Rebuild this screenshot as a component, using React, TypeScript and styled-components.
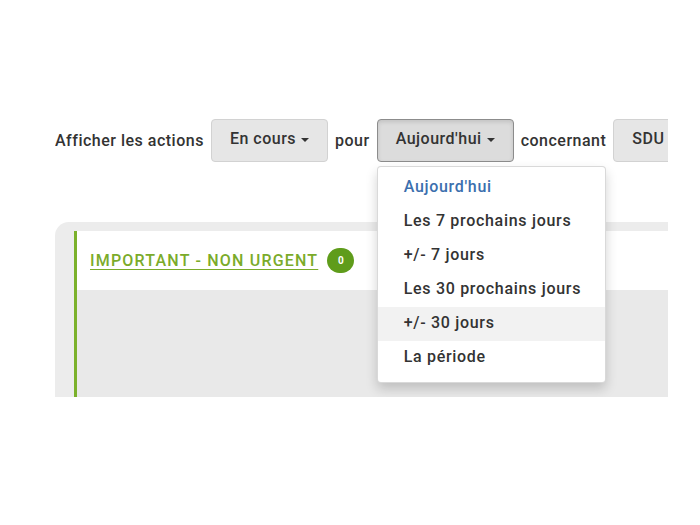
import React from 'react';
import styled, { createGlobalStyle } from 'styled-components';

const Global = createGlobalStyle`
  body {
    margin: 0;
    background: #fff;
    font-family: Roboto, "Liberation Sans", sans-serif;
    color: #333;
  }
`

const Page = styled.div`
  width: 613px;
  height: 397px;
  margin-left: 55px;
  padding-top: 119px;
  box-sizing: border-box;
  overflow: hidden;
`

const Toolbar = styled.div`
  display: flex;
  align-items: center;
  gap: 7px;
  white-space: nowrap;
  font-size: 16px;
  font-weight: 500;
  letter-spacing: 0.5px;
`

const Label = styled.span`
  color: #333;
`

const Group = styled.div`
  position: relative;
  flex-shrink: 0;
`

const Button = styled.button<{ $open?: boolean }>`
  height: 43px;
  padding: 0 18px 4px;
  display: flex;
  align-items: center;
  gap: 5px;
  font: inherit;
  letter-spacing: inherit;
  color: #333;
  background: ${p => (p.$open ? '#dcdcdc' : '#e6e6e6')};
  border: 1px solid ${p => (p.$open ? '#8c8c8c' : '#d2d2d2')};
  border-radius: 4px;
  box-shadow: ${p => (p.$open ? 'inset 0 2px 4px rgba(0,0,0,.12)' : 'none')};
`

const Caret = styled.span`
  width: 0;
  height: 0;
  border-left: 4px solid transparent;
  border-right: 4px solid transparent;
  border-top: 4px solid #333;
  margin-top: 2px;
`

const Menu = styled.ul`
  position: absolute;
  top: 47px;
  left: 0;
  width: 229px;
  margin: 0;
  padding: 4px 0 7px;
  list-style: none;
  background: #fff;
  border: 1px solid rgba(0, 0, 0, 0.15);
  border-radius: 4px;
  box-shadow: 0 6px 12px rgba(0, 0, 0, 0.18);
  box-sizing: border-box;
  letter-spacing: 0.7px;
  z-index: 5;
`

const Item = styled.li<{ $active?: boolean; $hover?: boolean }>`
  height: 34px;
  line-height: 32px;
  padding-left: 26px;
  color: ${p => (p.$active ? '#3b6fae' : '#333')};
  background: ${p => (p.$hover ? '#f2f2f2' : 'transparent')};
`

const Panel = styled.div`
  margin-top: 60px;
  background: #ececec;
  border-top-left-radius: 14px;
  padding: 9px 0 0 19px;
  height: 200px;
`

const Column = styled.div`
  border-left: 3px solid #7bb12b;
  height: 100%;
  background: #e9e9e9;
`

const Header = styled.div`
  height: 59px;
  background: #fff;
  display: flex;
  align-items: center;
  gap: 9px;
  padding-left: 13px;
`

const Title = styled.a`
  color: #7bab2a;
  text-decoration: underline;
  text-underline-offset: 3px;
  font-size: 16px;
  font-weight: 500;
  letter-spacing: 1.2px;
  text-transform: uppercase;
`

const Badge = styled.span`
  width: 27px;
  height: 25px;
  border-radius: 13px;
  background: #5f9c1b;
  color: #fff;
  font-size: 10px;
  font-weight: 700;
  display: flex;
  align-items: center;
  justify-content: center;
`

const periods = [
  "Aujourd'hui",
  'Les 7 prochains jours',
  '+/- 7 jours',
  'Les 30 prochains jours',
  '+/- 30 jours',
  'La période',
]

const App: React.FC = () => {
  return (
    <>
      <Global />
      <Page>
        <Toolbar>
          <Label>Afficher les actions</Label>
          <Group>
            <Button>En cours <Caret /></Button>
          </Group>
          <Label>pour</Label>
          <Group>
            <Button $open>Aujourd'hui <Caret /></Button>
            <Menu>
              {periods.map((p, i) => (
                <Item key={p} $active={i === 0} $hover={i === 4}>{p}</Item>
              ))}
            </Menu>
          </Group>
          <Label>concernant</Label>
          <Group>
            <Button>SDU <Caret /></Button>
          </Group>
        </Toolbar>
        <Panel>
          <Column>
            <Header>
              <Title>Important - non urgent</Title>
              <Badge>0</Badge>
            </Header>
          </Column>
        </Panel>
      </Page>
    </>
  )
}

export default App
